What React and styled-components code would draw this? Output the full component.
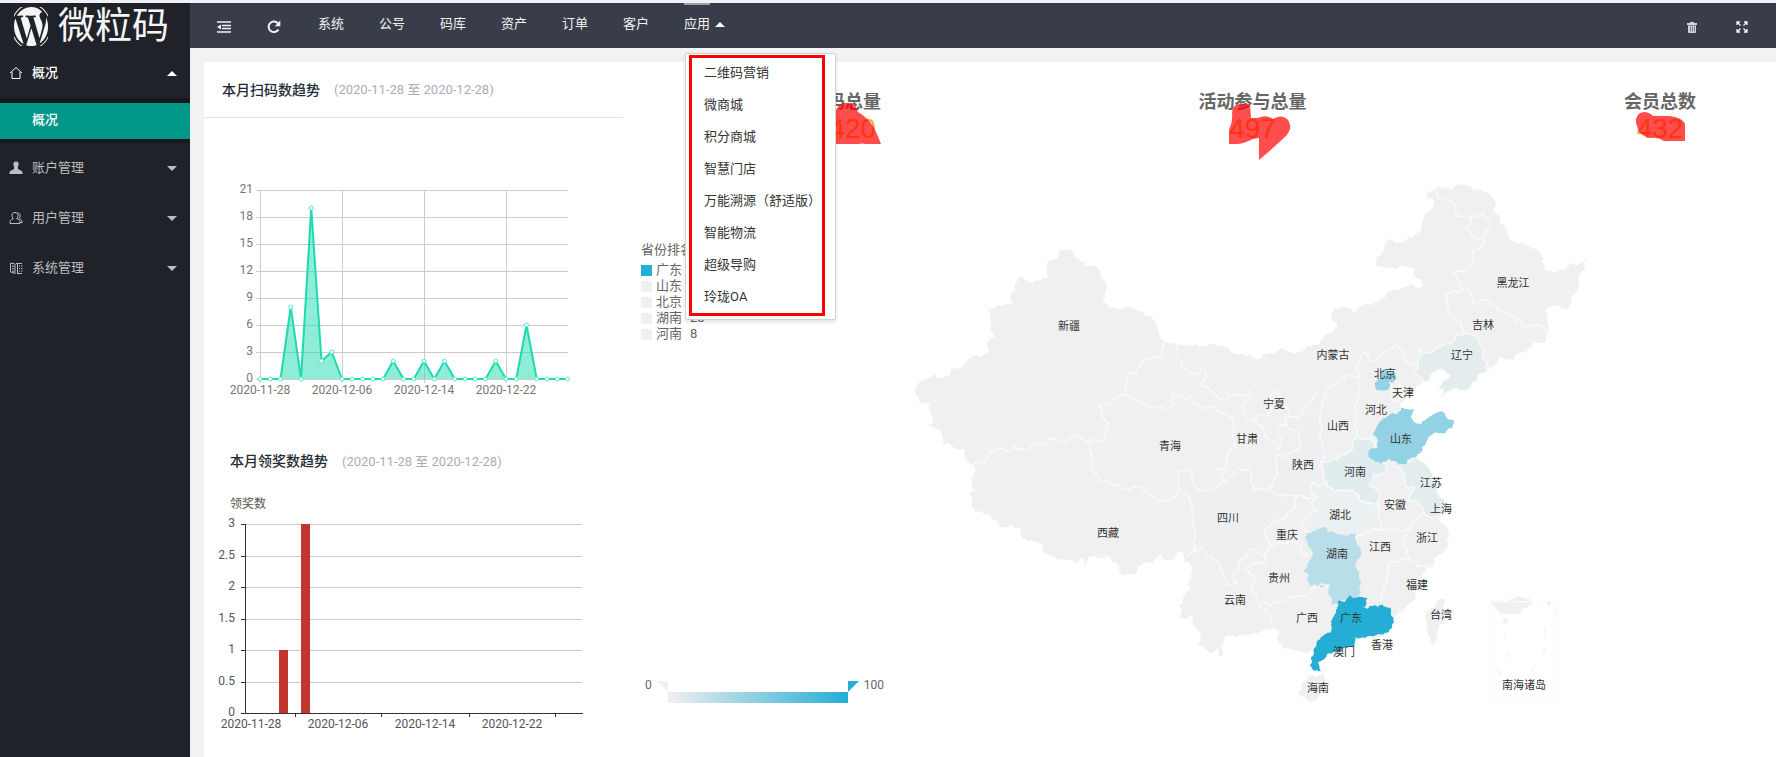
import { useState } from "react";
import styled, { createGlobalStyle } from "styled-components";
import { FaWordpress } from "react-icons/fa";

const menus = [
    { name: "账户管理", icon: "user" },
    { name: "用户管理", icon: "users" },
    { name: "系统管理", icon: "system" },
];

const navs = ["系统", "公号", "码库", "资产", "订单", "客户"];

const apps = ["二维码营销", "微商城", "积分商城", "智慧门店", "万能溯源（舒适版）", "智能物流", "超级导购", "玲珑OA"];

const stats = [
    {
        name: "扫码总量",
        value: 1420,
        width: 72,
        mark: "M26 54V22Q30 13 36 13H41Q46 13 49 22Q57 27 61 32Q66 38 72 54H56Q53 53 50 54Z",
    },
    {
        name: "活动参与总量",
        value: 497,
        width: 108,
        mark: "M33 23Q33 14 42 14H51L52 28H59Q67 24 74 29Q82 24 88 29Q95 36 87 46Q74 58 60 70V48L54 49Q44 54 38 54H30V40Q34 32 33 23Z",
    },
    {
        name: "会员总数",
        value: 432,
        width: 72,
        mark: "M12 33Q11 23 20 22Q25 22 29 26H45Q58 27 61 34V51H40Q34 47 28 48Q21 48 15 42Z",
    },
];

const ranks = [
    { name: "广东", color: "#24aed5" },
    { name: "山东" },
    { name: "北京" },
    { name: "湖南", value: 28 },
    { name: "河南", value: 8 },
];

const scans = [0, 0, 0, 8, 0, 19, 2, 3, 0, 0, 0, 0, 0, 2, 0, 0, 2, 0, 2, 0, 0, 0, 0, 2, 0, 0, 6, 0, 0, 0, 0];
const days = ["2020-11-28", "2020-12-06", "2020-12-14", "2020-12-22"];

const country =
    "484,268 500,270 515,266 520,290 540,300 555,318 575,318 600,330 605,350 620,375 615,400 608,425 625,440 660,447 705,450 735,470 765,485 775,510 795,545 825,547 890,553 945,551 975,560 990,573 1030,585 1060,592 1082,597 1110,580 1140,565 1220,560 1260,545 1275,525 1312,502 1295,478 1305,445 1360,458 1395,432 1435,425 1460,395 1515,380 1570,378 1565,360 1540,345 1545,330 1510,315 1490,328 1450,322 1430,318 1445,285 1467,238 1502,248 1550,222 1565,185 1580,155 1600,140 1598,118 1578,108 1595,92 1630,80 1685,73 1730,88 1762,95 1785,125 1800,170 1815,200 1828,240 1860,248 1890,260 1922,280 1925,305 1935,328 1980,328 2015,308 2062,298 2053,330 2035,360 2025,400 2005,443 1965,433 1937,450 1945,490 1943,515 1935,545 1915,550 1900,540 1895,562 1855,578 1845,603 1800,590 1785,612 1762,632 1715,672 1655,692 1615,720 1630,690 1618,688 1650,645 1630,630 1600,638 1568,668 1545,690 1520,715 1498,735 1505,745 1540,750 1538,785 1562,795 1600,765 1660,782 1655,803 1610,815 1575,850 1550,885 1545,892 1590,930 1595,955 1610,995 1635,1020 1640,1060 1625,1070 1610,1078 1640,1095 1640,1140 1628,1180 1600,1220 1570,1265 1550,1310 1515,1355 1480,1385 1465,1415 1395,1432 1365,1440 1360,1460 1300,1475 1255,1502 1242,1470 1200,1475 1160,1465 1132,1435 1140,1420 1100,1405 1080,1415 1040,1428 1010,1430 970,1438 973,1490 958,1488 950,1465 935,1478 915,1465 892,1450 900,1415 882,1400 878,1365 840,1372 838,1340 850,1315 872,1288 875,1250 873,1215 858,1205 850,1180 835,1175 820,1200 780,1183 725,1215 705,1242 658,1240 655,1215 635,1205 632,1190 580,1188 560,1205 555,1225 550,1195 500,1200 455,1190 430,1175 395,1140 375,1138 330,1095 297,1102 225,1055 218,1020 208,995 232,995 218,950 220,915 200,900 195,870 165,865 130,850 120,810 100,800 78,792 97,785 90,730 60,728 45,698 60,665 105,643 120,655 145,648 155,623 185,622 200,608 240,590 265,575 268,540 285,528 272,495 270,455 258,450 320,432 343,437 333,420 345,390 358,350 375,360 420,363 445,350 442,305 475,292";

const islands = [
    "1230,1545 1275,1542 1280,1570 1265,1600 1230,1625 1202,1610 1205,1570",
    "1615,1320 1635,1317 1633,1360 1615,1410 1600,1458 1580,1425 1578,1385 1595,1345",
    "1772,1330 1785,1326 1900,1326 1885,1342 1820,1362 1790,1350",
    "1935,1326 1955,1326 1947,1350",
    "1807,1395 1812,1376 1827,1374 1820,1392",
];

const borders = [
    "795,545 788,585 755,592 720,620 710,640 685,643 678,690 665,707 640,718 593,738 605,745 605,770 628,795 620,838 575,838 530,823 465,835 435,855 385,870 345,858 325,873 270,872 250,910 220,915",
    "825,547 845,605 865,637 915,627 920,650 903,670 940,695 975,722 1010,703 1050,692 1050,715 1030,735 1030,755 1062,780 1105,765 1115,710 1138,695 1145,725 1170,765",
    "665,707 690,707 700,722 735,730 745,742 800,748 820,738 820,703 855,718 875,708 920,742 940,740 985,768 1005,800 1005,860 980,895 985,920 945,920 970,960",
    "575,838 572,870 580,900 580,935 605,965 665,985 740,995 770,1025 805,1025 835,990",
    "887,1180 880,1150 873,1180 860,1190",
    "1062,780 1090,800 1095,830 1130,870 1145,850 1130,820 1140,795 1160,795",
    "1275,700 1320,660 1375,648 1380,680 1365,740 1370,820 1370,835",
    "1375,648 1378,605 1395,575 1410,600 1450,582 1490,555 1510,570 1515,605 1550,610",
    "1635,405 1660,392 1705,390 1720,430 1790,440 1845,485 1860,475 1870,508 1905,495 1943,515",
    "1635,405 1650,470 1685,490 1690,515 1700,520",
    "1630,80 1615,115 1660,130 1675,170 1710,170 1750,158 1772,185 1750,235 1745,262 1725,270 1720,300 1660,340 1680,370 1680,392",
    "1713,170 1700,205 1728,240 1750,235",
    "1485,662 1500,690 1495,725 1475,715 1478,690 1468,665",
    "1445,1110 1500,1112 1530,1110 1560,1065 1580,1065",
    "1520,1120 1515,1160 1530,1200 1550,1220 1600,1218",
    "1520,1195 1480,1205 1465,1240 1450,1290 1435,1335",
    "1370,1135 1410,1115 1445,1110",
    "1075,1340 1090,1325 1140,1328 1180,1310 1230,1290 1285,1275",
    "1100,1200 1090,1210 1035,1230 1065,1260 1060,1300 1075,1340 1115,1370 1105,1400",
    "1110,1160 1150,1150 1190,1145 1205,1180 1225,1190",
    "1190,1010 1230,1030",
];

const provinces = [
    { fill: "#edeff1", points: "860,930 885,980 935,990 970,965 985,955 1015,925 1055,945 1060,985 1090,990 1110,980 1190,1010 1185,1040 1160,1070 1110,1095 1095,1125 1110,1160 1100,1200 1050,1165 1040,1180 1015,1215 1012,1270 980,1275 940,1200 905,1160 890,1180 887,1120 880,1050 865,1010 835,990 835,930" },
    { fill: "#edeff1", points: "1275,700 1265,750 1260,820 1263,905 1280,965 1235,970 1230,1000 1250,1015 1190,1010 1110,980 1130,950 1130,885 1170,880 1200,865 1195,820 1160,790 1160,768 1205,765 1220,730 1250,700" },
    { fill: "#e4ecee", points: "1555,567 1575,580 1610,560 1660,545 1700,520 1735,535 1750,585 1762,632 1715,672 1655,692 1615,720 1630,690 1618,688 1650,645 1630,630 1600,638 1568,668 1540,640 1553,610" },
    { fill: "#ebf0f1", points: "1280,965 1305,995 1370,1000 1380,1020 1435,1035 1445,1110 1410,1115 1370,1135 1340,1132 1300,1118 1270,1103 1225,1120 1200,1100 1215,1080 1255,1055 1235,1030 1250,1015 1230,1000 1235,970" },
    { fill: "#e0ecee", points: "1370,830 1425,845 1407,880 1430,905 1460,915 1455,935 1420,942 1410,980 1440,995 1435,1035 1380,1020 1370,1000 1305,995 1280,965 1263,905 1350,875" },
    { fill: "#e3ecef", points: "1465,892 1520,908 1545,892 1590,930 1595,955 1610,995 1635,1020 1640,1060 1580,1065 1525,1020 1545,982 1515,975 1512,940 1480,915" },
    { fill: "#93d2e4", points: "1505,745 1540,750 1538,785 1562,795 1600,765 1660,782 1655,803 1610,815 1575,850 1550,885 1520,908 1465,892 1455,903 1425,903 1407,880 1445,840 1422,825 1435,795 1465,770 1495,762" },
    { fill: "#93d2e4", points: "1455,628 1485,645 1485,662 1468,665 1465,685 1428,683 1428,668 1445,655" },
    { fill: "#b8dee9", points: "1225,1120 1270,1103 1300,1118 1340,1132 1365,1122 1368,1150 1382,1175 1365,1210 1375,1250 1375,1305 1345,1310 1320,1320 1295,1332 1287,1300 1290,1268 1250,1275 1230,1275 1228,1250 1213,1230 1228,1205 1225,1150" },
    { fill: "#24aed5", points: "1315,1325 1335,1328 1350,1308 1375,1312 1400,1315 1385,1345 1410,1340 1435,1345 1440,1332 1470,1345 1472,1368 1480,1385 1465,1415 1435,1418 1395,1432 1365,1430 1360,1460 1330,1462 1300,1475 1278,1485 1255,1502 1260,1532 1242,1530 1237,1500 1242,1470 1270,1430 1290,1420 1295,1385 1312,1360" },
];

const places = [
    ["新疆", 169, 166], ["西藏", 208, 373], ["青海", 270, 286], ["甘肃", 347, 279], ["宁夏", 374, 244],
    ["内蒙古", 433, 195], ["黑龙江", 613, 123], ["吉林", 583, 165], ["辽宁", 562, 195], ["北京", 485, 214],
    ["天津", 503, 233], ["河北", 476, 250], ["山西", 438, 266], ["山东", 501, 279], ["陕西", 403, 305],
    ["河南", 455, 312], ["江苏", 531, 323], ["安徽", 495, 345], ["上海", 541, 349], ["湖北", 440, 355],
    ["重庆", 387, 375], ["浙江", 527, 378], ["江西", 480, 387], ["湖南", 437, 394], ["四川", 328, 358],
    ["贵州", 379, 418], ["福建", 517, 425], ["云南", 335, 440], ["广西", 407, 458], ["广东", 451, 458],
    ["台湾", 541, 455], ["澳门", 444, 492], ["香港", 482, 485], ["海南", 418, 528], ["南海诸岛", 624, 525],
];

// breaks a straight edge into small bends; both neighbours of an edge get the same bends
function bend(a, b, depth) {
    const length = Math.hypot(b[0] - a[0], b[1] - a[1]);
    if (depth === 0 || length < 7) return [b];
    const flip = a[0] > b[0] || (a[0] === b[0] && a[1] > b[1]);
    const seed = Math.sin((a[0] + b[0]) * 12.9898 + (a[1] + b[1]) * 78.233) * 43758.5453;
    const shift = (seed - Math.floor(seed) - 0.5) * 0.5 * (flip ? -1 : 1);
    const mid = [(a[0] + b[0]) / 2 - (b[1] - a[1]) * shift, (a[1] + b[1]) / 2 + (b[0] - a[0]) * shift];
    return [...bend(a, mid, depth - 1), ...bend(mid, b, depth - 1)];
}

function outline(points, closed) {
    const list = points.split(" ").map(p => p.split(",").map(Number));
    const ends = closed ? [...list.slice(1), list[0]] : list.slice(1);
    const bends = ends.flatMap((end, i) => bend(list[i], end, 3));
    return `M${list[0]}L${bends.map(p => p.map(n => n.toFixed(1))).join(" ")}${closed ? "Z" : ""}`;
}

function MenuIcon({ name }) {
    return (
        <IconBox viewBox="0 0 14 14">
            {name === "home" && <path d="M1 7 7 1.5 13 7M3 6v6.5h8V6" fill="none" stroke="currentColor" />}
            {name === "user" && <path d="M4.6 1.6Q7-.4 9.4 1.6 10 4 8.8 6.4L9 8l4 2.2.8 2.8H.2L1 10.2 5 8l.2-1.6Q4 4 4.6 1.6Z" fill="currentColor" />}
            {name === "users" && <path d="M6 1.5c4 0 3.6 4.5 1.6 6.2 3 .8 3.4 2 3.4 4.800H1c0-3 .4-4 3.4-4.800C2.400 6 2 1.5 6 1.500ZM8.500 2c3 0 3.500 3.500 1.500 5.500 2.500.8 3 2 3.300 4H11" fill="none" stroke="currentColor" />}
            {name === "system" && <path d="M1.500 2 6 3v9.500l-4.500-1.500ZM3 5l2 .5M3 7.500l2 .5M3 10l2 .5M8.500 2v11M7 2.500h6M10 5h1M12 5h1.500M10 7.500h1M12 7.500h1.500M10 10h1M12 10h1.500M8 12.500h5" fill="none" stroke="currentColor" />}
        </IconBox>
    );
}

function Sidebar() {
    return (
        <Side>
            <Logo href="#">
                <FaWordpress viewBox="43 43 425 425" preserveAspectRatio="none" />
                <span>微粒码</span>
            </Logo>
            <SideButton $active>
                <MenuIcon name="home" />
                <span>概况</span>
                <Caret $up />
            </SideButton>
            <SubMenu>
                <a href="#">概况</a>
            </SubMenu>
            {menus.map(menu =>
                <SideButton key={menu.name}>
                    <MenuIcon name={menu.icon} />
                    <span>{menu.name}</span>
                    <Caret />
                </SideButton>)}
        </Side>
    );
}

function TopBar() {
    const [open, setOpen] = useState(true);

    return (
        <Bar>
            <Tool aria-label="侧边伸缩">
                <svg width="14" height="12" viewBox="0 0 14 12">
                    <path d="M0 1h14M5 4.500h9M5 7.500h9M0 11h14" stroke="currentColor" strokeWidth="1.400" />
                    <path d="M0 6 4 3.500v5Z" fill="currentColor" />
                </svg>
            </Tool>
            <Tool aria-label="刷新">
                <svg width="14" height="14" viewBox="0 0 14 14">
                    <path d="M11.500 9.500A5.300 5.300 0 1 1 11 3.400" fill="none" stroke="currentColor" strokeWidth="2" />
                    <path d="M13.300.6v5.600H7.700Z" fill="currentColor" />
                </svg>
            </Tool>
            <Nav>
                {navs.map(nav => <NavLink href="#" key={nav}>{nav}</NavLink>)}
                <Apps>
                    <AppsButton onClick={() => setOpen(!open)} aria-expanded={open}>应用 <Caret $up /></AppsButton>
                    {open && <DropDown>
                        {apps.map(app => <li key={app}><a href="#">{app}</a></li>)}
                    </DropDown>}
                </Apps>
            </Nav>
            <Tool aria-label="清除缓存">
                <svg width="10" height="11" viewBox="0 0 10 11">
                    <path d="M0 1h3V0h4v1h3v2H0ZM1 3.500h8V10q0 1-1 1H2Q1 11 1 10Z" fill="#d4d5d8" />
                    <path d="M3.500 4.500v5M5.500 4.500v5M7.500 4.500v5" stroke="#393d49" strokeWidth=".6" />
                </svg>
            </Tool>
            <Tool aria-label="全屏">
                <svg width="12" height="12" viewBox="0 0 12 12">
                    <path d="M1 4V1h3M1.500 1.500 4.500 4.500M8 1h3v3M10.500 1.500l-3 3M1 8v3h3M1.500 10.500l3-3M8 11h3V8M10.500 10.500l-3-3" fill="none" stroke="currentColor" strokeWidth="1.300" />
                </svg>
            </Tool>
        </Bar>
    );
}

function ScanChart() {
    const points = scans.map((value, i) => [56 + i * 10.25, 261 - value * 9]);

    return (
        <Chart viewBox="0 0 419 317">
            {[0, 3, 6, 9, 12, 15, 18, 21].map(n =>
                <g key={n}>
                    <path d={`M52 ${261.5 - n * 9}H364`} stroke="#ccc" />
                    <text x="49" y={264 - n * 9} textAnchor="end">{n}</text>
                </g>)}
            {days.map((day, i) =>
                <g key={day}>
                    <path d={`M${56.5 + i * 82} 72V265`} stroke="#ccc" />
                    <text x={56 + i * 82} y="276" textAnchor="middle">{day}</text>
                </g>)}
            <path d={`M${points.join("L")}V261H56Z`} fill="#1edab0" fillOpacity=".5" />
            <path d={`M${points.join("L")}`} fill="none" stroke="#1edab0" strokeWidth="2" strokeLinejoin="bevel" />
            {points.map(([x, y]) => <circle key={x} cx={x} cy={y} r="2" fill="#fff" stroke="#5de5c7" />)}
        </Chart>
    );
}

function PrizeChart() {
    return (
        <Chart viewBox="0 7 419 270" $dark>
            <text x="26" y="28">领奖数</text>
            {[0, 0.5, 1, 1.5, 2, 2.5, 3].map(n =>
                <g key={n}>
                    <path d={`M42 ${Math.round(233 - n * 63) + 0.5}H378`} stroke="#ccc" />
                    <path d={`M37 ${Math.round(233 - n * 63) + 0.5}h5`} stroke="#333" />
                    <text x="31" y={236 - n * 63} textAnchor="end">{n}</text>
                </g>)}
            <path d="M75 233v-63h9v63ZM97 233V44h9v189Z" fill="#c23531" />
            <path d="M41.500 44V234M37 233.500H379M91.500 234v3M177.500 234v3M265.500 234v3M351.500 234v3" stroke="#333" />
            {days.map((day, i) => <text key={day} x={47 + i * 87} y="248" textAnchor="middle">{day}</text>)}
        </Chart>
    );
}

function ChinaMap() {
    return (
        <MapSvg viewBox="0 0 876 597">
            <g transform="scale(0.33333)" fill="#f0f0f0" strokeLinejoin="round">
                <path d={outline(country, true)} />
                {islands.map(points => <path key={points} d={outline(points, true)} />)}
                <g fill="none" stroke="#fafafa" strokeWidth="4">
                    {provinces.map(({ points, fill }) => <path key={points} d={outline(points, true)} fill={fill} stroke={fill < "#c" ? fill : "#fafafa"} />)}
                    {borders.map(points => <path key={points} d={outline(points, false)} />)}
                </g>
                <path d="M1772 1325h200v293h-200Z" fill="none" stroke="#fafafa" strokeWidth="4" />
                <path d="M1967 1350l-8 22M1935 1405v28M1813 1420l6 22M1935 1465l-8 22M1827 1475l-13 16M1793 1525l8 22M1905 1520l-13 22" fill="none" stroke="#f3f3f3" strokeWidth="4" />
            </g>
            {places.map(([name, x, y]) => <text key={name} x={x} y={y + 4} textAnchor="middle">{name}</text>)}
        </MapSvg>
    );
}

export default function App() {
    return (
        <>
            <GlobalStyle />
            <Page>
                <Sidebar />
                <Main>
                    <TopBar />
                    <Content>
                        <Trends>
                            <CardTitle $line>
                                <h2>本月扫码数趋势</h2>
                                <span>(2020-11-28 至 2020-12-28)</span>
                            </CardTitle>
                            <ScanChart />
                            <CardTitle>
                                <h2>本月领奖数趋势</h2>
                                <span>(2020-11-28 至 2020-12-28)</span>
                            </CardTitle>
                            <PrizeChart />
                        </Trends>
                        <Overview>
                            <Stats>
                                {stats.map(stat =>
                                    <Stat key={stat.name}>
                                        <h3>{stat.name}</h3>
                                        <p>{stat.value}</p>
                                        <Mark viewBox={`0 0 ${stat.width} 72`}><path d={stat.mark} /></Mark>
                                    </Stat>)}
                            </Stats>
                            <MapArea>
                                <Legend>
                                    <h4>省份排名</h4>
                                    {ranks.map(rank =>
                                        <Rank key={rank.name} color={rank.color}>
                                            <i /><span>{rank.name}</span>{rank.value}
                                        </Rank>)}
                                    <Range>
                                        <span>0</span>
                                        <svg width="202" height="22" viewBox="0 0 202 22">
                                            <defs>
                                                <linearGradient id="range">
                                                    <stop offset="0" stopColor="#f0f0f0" />
                                                    <stop offset=".25" stopColor="#bcdfe8" />
                                                    <stop offset="1" stopColor="#24aed5" />
                                                </linearGradient>
                                            </defs>
                                            <path d="M0 0h11v11Z" fill="#f0f0f0" />
                                            <path d="M11 11h180v11H11Z" fill="url(#range)" />
                                            <path d="M191 0h11l-11 11Z" fill="#24aed5" />
                                        </svg>
                                        <span>100</span>
                                    </Range>
                                </Legend>
                                <ChinaMap />
                            </MapArea>
                        </Overview>
                    </Content>
                </Main>
            </Page>
        </>
    );
}

const GlobalStyle = createGlobalStyle`
    * {
        box-sizing: border-box;
        margin: 0;
        padding: 0;
    }

    body {
        background: #f2f2f2;
        font-family: Roboto, "Noto Sans CJK SC", sans-serif;
        font-size: 13px;
        color: #333;
        overflow: hidden;
    }

    a {
        color: inherit;
        text-decoration: none;
    }

    button {
        border: none;
        background: none;
        color: inherit;
        font: inherit;
        cursor: pointer;
    }

    li {
        list-style: none;
    }
`;

const Page = styled.div`
    display: flex;
    min-height: 100vh;
    border-top: 3px solid #f0f0f6;
`;

const Side = styled.aside`
    width: 190px;
    flex-shrink: 0;
    background: #20222a;
    color: #fff;
`;

const Logo = styled.a`
    display: flex;
    align-items: center;
    gap: 10px;
    height: 45px;
    padding: 2px 0 0 14px;
    color: #f5f5f5;
    font-size: 37px;
    line-height: 37px;

    svg {
        width: 34px;
        height: 39px;
    }
`;

const IconBox = styled.svg`
    width: 14px;
    height: 14px;
    margin-right: 9px;
`;

const Caret = styled.i`
    border: 5px solid transparent;
    border-width: ${props => props.$up ? "0 5px 5px" : "5px 5px 0"};
    border-color: ${props => props.$up ? "transparent transparent #fff" : "#bcbdbf transparent transparent"};
`;

const SideButton = styled.button`
    display: flex;
    align-items: center;
    width: 100%;
    height: 50px;
    padding: 0 13px 0 9px;
    color: ${props => props.$active ? "#fff" : "#bcbdbf"};
    font-weight: ${props => props.$active ? 500 : 400};

    span {
        padding-bottom: 3px;
    }

    ${Caret} {
        margin-left: auto;
    }
`;

const SubMenu = styled.div`
    padding: 5px 0 4px;
    background: #16181d;

    a {
        display: block;
        height: 36px;
        padding-left: 32px;
        background: #009688;
        line-height: 34px;
        font-weight: 500;
    }
`;

const Main = styled.main`
    flex: 1;
    min-width: 0;
    display: flex;
    flex-direction: column;
`;

const Bar = styled.header`
    display: flex;
    align-items: center;
    height: 45px;
    padding: 0 9px;
    background: #393d49;
    color: #f2f2f2;
`;

const Tool = styled.button`
    display: flex;
    align-items: center;
    justify-content: center;
    width: 50px;
    height: 45px;
    padding-top: 3px;
`;

const Nav = styled.nav`
    display: flex;
    flex: 1;
    gap: 35px;
    margin-left: 19px;
    line-height: 42px;
`;

const NavLink = styled.a`
    height: 45px;
`;

const Apps = styled.div`
    position: relative;
    height: 45px;
`;

const AppsButton = styled.button`
    display: flex;
    align-items: center;
    gap: 5px;
    line-height: 42px;

    &::before {
        content: "";
        position: absolute;
        top: 0;
        left: 0;
        width: 26px;
        height: 2px;
        background: #9c9ea4;
    }
`;

const DropDown = styled.ul`
    position: absolute;
    top: 50px;
    left: 1px;
    z-index: 2;
    width: 151px;
    padding: 3px 0 6px;
    border: 1px solid #d2d2d2;
    border-radius: 2px;
    background: #fff;
    box-shadow: 0 2px 4px rgba(0, 0, 0, 0.12);
    color: #333;
    line-height: 32px;
    white-space: nowrap;

    &::after {
        content: "";
        position: absolute;
        inset: 1px 10px 3px 3px;
        border: 3px solid #fe0000;
        pointer-events: none;
    }

    a {
        display: block;
        padding-left: 18px;
    }
`;

const Content = styled.div`
    flex: 1;
    display: grid;
    grid-template-columns: 419px 1fr;
    gap: 18px;
    margin: 14px 0 0 14px;
    background: #fff;
`;

const Trends = styled.section`
    min-width: 0;
`;

const CardTitle = styled.div`
    display: flex;
    align-items: center;
    gap: 14px;
    height: ${props => props.$line ? "56px" : "52px"};
    padding-bottom: 2px;
    padding-left: ${props => props.$line ? "18px" : "26px"};
    border-bottom: ${props => props.$line ? "1px solid #e2e2e2" : "none"};
    color: #a9adb8;

    h2 {
        color: #222c33;
        font-size: 14px;
        font-weight: 500;
    }
`;

const Chart = styled.svg`
    display: block;
    width: 100%;

    text {
        font-size: 12px;
        fill: ${props => props.$dark ? "#555" : "#777"};
    }
`;

const Overview = styled.section`
    min-width: 0;
`;

const Stats = styled.div`
    display: flex;
    justify-content: space-between;
    padding: 28px 80px 16px 168px;
`;

const Stat = styled.div`
    position: relative;
    text-align: center;

    h3 {
        color: #666;
        font-size: 18px;
        font-weight: 700;
        line-height: 24px;
    }

    p {
        color: #f0b040;
        font-family: "Liberation Sans", sans-serif;
        font-size: 28px;
        line-height: 30px;
    }
`;

const Mark = styled.svg`
    position: absolute;
    top: 0;
    left: 0;
    width: 100%;
    fill: rgba(255, 0, 0, 0.7);
`;

const MapArea = styled.div`
    display: flex;
    align-items: flex-start;
`;

const Legend = styled.div`
    width: 259px;
    flex-shrink: 0;
    padding-top: 80px;
    color: #666;

    h4 {
        margin-bottom: 2px;
        font-size: 13px;
        font-weight: 400;
        line-height: 20px;
    }
`;

const Rank = styled.div`
    display: flex;
    align-items: center;
    line-height: 16px;

    i {
        width: 11px;
        height: 11px;
        margin-right: 4px;
        background: ${props => props.color || "#f0f0f0"};
    }

    span {
        width: 34px;
    }
`;

const Range = styled.div`
    display: flex;
    gap: 5px;
    margin-top: 335px;
    padding-left: 4px;
    font-size: 12px;
    line-height: 16px;

    svg {
        margin-top: 4px;
    }
`;

const MapSvg = styled.svg`
    display: block;
    flex: 1;
    min-width: 0;

    text {
        font-size: 11px;
        fill: #333;
    }
`;
